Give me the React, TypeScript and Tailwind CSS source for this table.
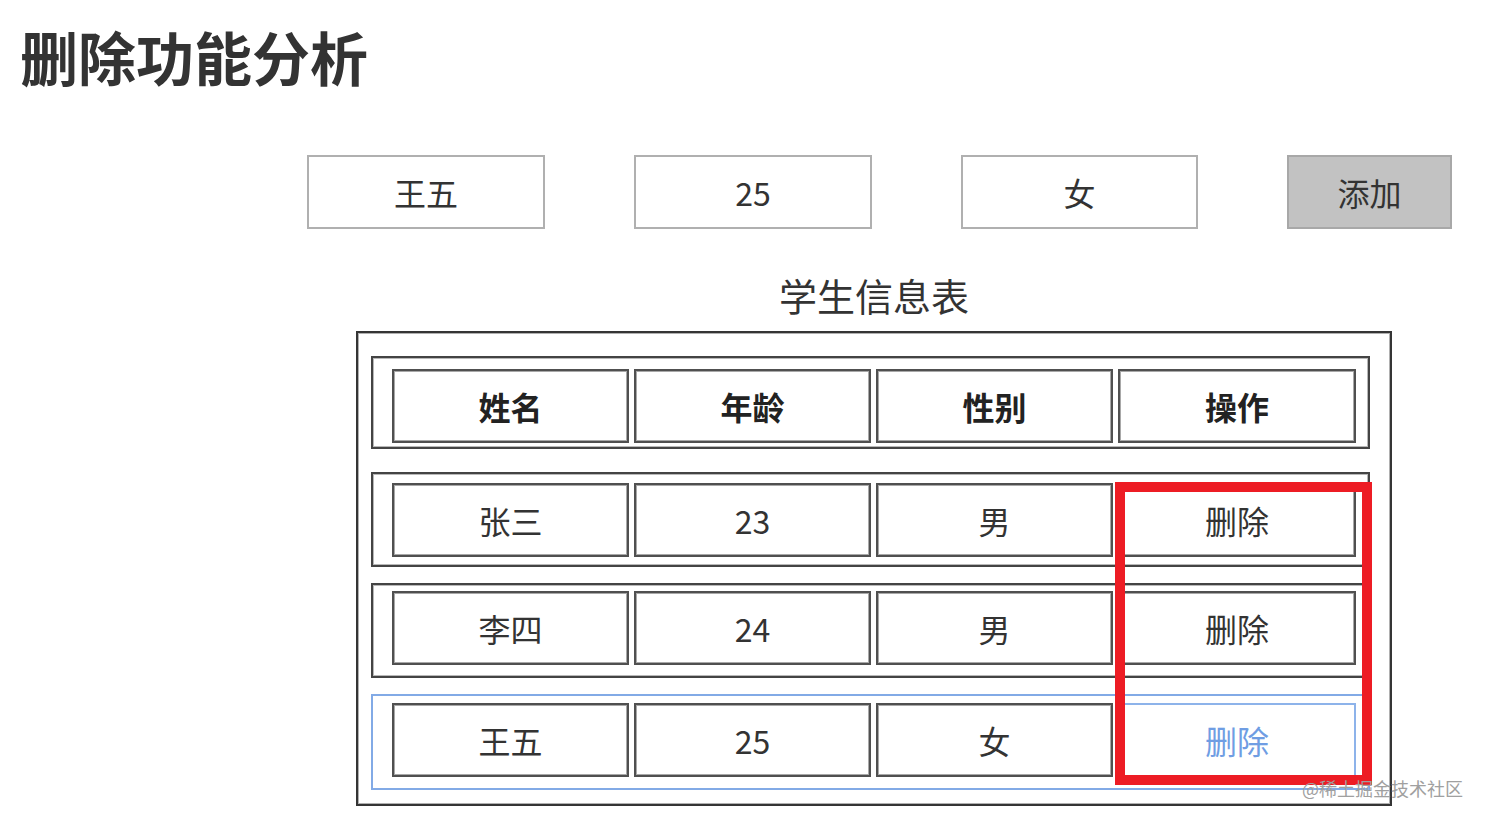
import React from "react";

const FONT = { fontFamily: '"Noto Sans CJK SC", "Noto Sans", sans-serif' };

type Row = { name: string; age: string; sex: string; blue?: boolean; pt: string; h: string; mt: string };

const rows: Row[] = [
  { name: "张三", age: "23", sex: "男", pt: "pt-[9px]", h: "h-[95px]", mt: "mt-[23px]" },
  { name: "李四", age: "24", sex: "男", pt: "pt-[6px]", h: "h-[95px]", mt: "mt-[16px]" },
  { name: "王五", age: "25", sex: "女", blue: true, pt: "pt-[7px]", h: "h-[96px]", mt: "mt-[16px]" },
];

function Cell({ children, bold, blue, last }: { children: React.ReactNode; bold?: boolean; blue?: boolean; last?: boolean }) {
  const color = blue ? "text-[#6f9de3]" : bold ? "text-[#222]" : "text-[#333]";
  return (
    <div
      className={
        "flex h-[74px] items-center justify-center border-2 text-[32px] leading-none " +
        (last ? "w-[238px] " : "w-[237px] ") +
        (bold ? "font-bold " : "") +
        color +
        " " +
        (blue
          ? "border-[#8db3ea]"
          : "border-[#505050] shadow-[inset_0_0_0_1px_#a8a8a8]")
      }
    >
      {children}
    </div>
  );
}

export default function App() {
  return (
    <div className="relative h-[825px] w-[1485px] overflow-hidden bg-white" style={FONT}>
      <h1 className="ml-[20px] mt-[27px] text-[58px] font-bold leading-none text-[#333]">删除功能分析</h1>

      <div className="ml-[307px] mt-[70px] flex gap-[89px]">
        <div className="flex h-[74px] w-[238px] items-center justify-center border-2 border-[#b0b0b0] text-[32px] text-[#333]">王五</div>
        <div className="flex h-[74px] w-[238px] items-center justify-center border-2 border-[#b0b0b0] text-[32px] text-[#333]">25</div>
        <div className="flex h-[74px] w-[237px] items-center justify-center border-2 border-[#b0b0b0] text-[32px] text-[#333]">女</div>
        <div className="flex h-[74px] w-[165px] items-center justify-center border-2 border-[#a8a8a8] bg-[#c2c2c2] text-[32px] text-[#333]">添加</div>
      </div>

      <div className="ml-[356px] mt-[47px] w-[1036px] text-center text-[38px] leading-none text-[#333]">学生信息表</div>

      <div className="relative ml-[356px] mt-[17px] h-[475px] w-[1036px] border-2 border-[#353535] pl-[13px] pt-[23px] shadow-[inset_0_0_0_1px_#b0b0b0]">
        <div className="flex h-[93px] w-[999px] gap-[5px] border-2 border-[#444] pl-[19px] pt-[11px] shadow-[inset_0_0_0_1px_#b8b8b8]">
          <Cell bold>姓名</Cell>
          <Cell bold>年龄</Cell>
          <Cell bold>性别</Cell>
          <Cell bold last>操作</Cell>
        </div>
        {rows.map((r) => (
          <div
            key={r.name}
            className={
              "flex w-[999px] gap-[5px] border-2 pl-[19px] " +
              r.pt + " " + r.h + " " + r.mt + " " +
              (r.blue ? "border-[#82aae6]" : "border-[#444] shadow-[inset_0_0_0_1px_#b8b8b8]")
            }
          >
            <Cell>{r.name}</Cell>
            <Cell>{r.age}</Cell>
            <Cell>{r.sex}</Cell>
            <Cell last blue={r.blue}>删除</Cell>
          </div>
        ))}

        <div className="absolute left-[757px] top-[149px] h-[303px] w-[257px] border-[10px] border-[#ed1c24]" />
      </div>

      <div className="absolute left-[1302px] top-[779px] text-[18px] leading-none text-[#a0a0a0]">@稀土掘金技术社区</div>
    </div>
  );
}
